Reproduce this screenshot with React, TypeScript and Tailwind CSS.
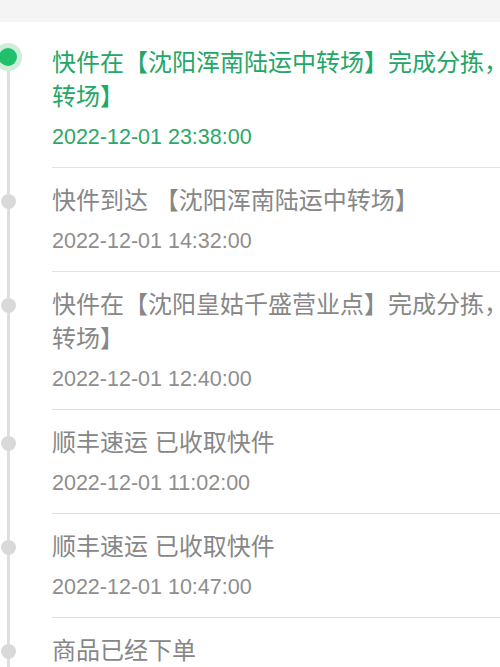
import React from 'react';

type Track = {
    lines: string[];
    time: string;
};

const TRACKS: Track[] = [
    { lines: ['快件在【沈阳浑南陆运中转场】完成分拣，准备发往', '转场】'], time: '2022-12-01 23:38:00' },
    { lines: ['快件到达 【沈阳浑南陆运中转场】'], time: '2022-12-01 14:32:00' },
    { lines: ['快件在【沈阳皇姑千盛营业点】完成分拣，准备发往', '转场】'], time: '2022-12-01 12:40:00' },
    { lines: ['顺丰速运 已收取快件'], time: '2022-12-01 11:02:00' },
    { lines: ['顺丰速运 已收取快件'], time: '2022-12-01 10:47:00' },
    { lines: ['商品已经下单'], time: '' },
];

export default function App() {
    return (
        <div
            className="w-full h-[667px] overflow-hidden bg-white"
            style={{ fontFamily: '"Liberation Sans", "Noto Sans CJK SC", sans-serif' }}
        >
            {/* top band */}
            <div className="h-[22px] bg-[#f4f4f4]" />

            <div className="flex flex-col pt-2">
                {TRACKS.map((t, idx) => {
                    const active = idx === 0;
                    return (
                        <div key={idx} className="flex">
                            {/* rail + dot */}
                            <div className="w-[52px] shrink-0">
                                <div className="w-4 h-full flex flex-col items-center">
                                    {active ? (
                                        <>
                                            <div className="h-[13px] shrink-0" />
                                            <div className="w-[28px] h-[28px] shrink-0 rounded-full bg-[#cdeedb] flex items-center justify-center">
                                                <div className="w-[18px] h-[18px] rounded-full bg-[#21c06b]" />
                                            </div>
                                        </>
                                    ) : (
                                        <>
                                            <div className="h-[26px] w-[3px] shrink-0 bg-[#dedede]" />
                                            <div className="w-[15px] h-[15px] shrink-0 rounded-full bg-[#d9d9d9]" />
                                        </>
                                    )}
                                    <div className="flex-1 w-[3px] bg-[#dedede]" />
                                </div>
                            </div>

                            {/* content */}
                            <div className="flex-1 min-w-0 overflow-hidden pt-4 pb-[15px] border-b border-[#e3e3e3]">
                                <div
                                    className={`text-[24px] leading-[34px] whitespace-nowrap ${active ? 'text-[#23a766]' : 'text-[#878787]'}`}
                                >
                                    {t.lines.map((l, i) => (
                                        <div key={i}>{l}</div>
                                    ))}
                                </div>
                                {t.time && (
                                    <div
                                        className={`mt-2 text-[21.5px] leading-[30px] ${active ? 'text-[#2aa86a]' : 'text-[#8e8e8e]'}`}
                                    >
                                        {t.time}
                                    </div>
                                )}
                            </div>
                        </div>
                    );
                })}
            </div>
        </div>
    );
}
